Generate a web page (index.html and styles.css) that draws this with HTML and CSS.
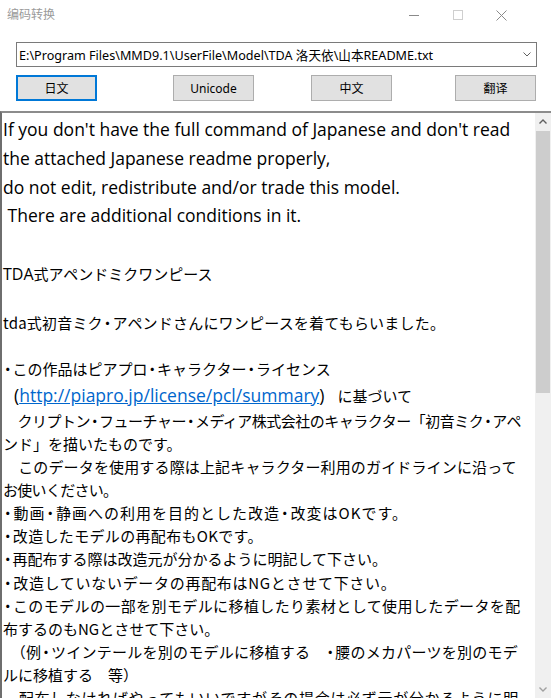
FILE: index.html
```html
<!DOCTYPE html>
<html lang="zh">
<head>
<meta charset="utf-8">
<title>编码转换</title>
<link rel="stylesheet" href="styles.css">
</head>
<body>
<div class="window">
  <div class="titlebar">
    <span class="title">编码转换</span>
    <div class="controls">
      <svg class="ctl ctl-min" width="11" height="11" viewBox="0 0 11 11"><line x1="0" y1="5.5" x2="10" y2="5.5" stroke="#8a8a8a" stroke-width="1"/></svg>
      <svg class="ctl ctl-max" width="10" height="10" viewBox="0 0 10 10"><rect x="0.5" y="0.5" width="9" height="9" fill="none" stroke="#cfcfcf" stroke-width="1"/></svg>
      <svg class="ctl ctl-close" width="11" height="11" viewBox="0 0 11 11"><path d="M0.5 0.5 L10.5 10.5 M10.5 0.5 L0.5 10.5" stroke="#8a8a8a" stroke-width="1" fill="none"/></svg>
    </div>
  </div>

  <div class="combo">
    <span class="combo-text">E:\Program Files\MMD9.1\UserFile\Model\TDA 洛天依\山本README.txt</span>
    <svg class="combo-arrow" width="8" height="5" viewBox="0 0 8 5"><polyline points="0.5,0.5 4,4 7.5,0.5" fill="none" stroke="#606060" stroke-width="1"/></svg>
  </div>

  <div class="btnrow">
    <button class="btn btn-focus">日文</button>
    <button class="btn btn-2">Unicode</button>
    <button class="btn btn-3">中文</button>
    <button class="btn btn-4">翻译</button>
  </div>

  <div class="textbox">
    <div class="content">
      <div class="ln en h29">If you don't have the full command of Japanese and don't read</div>
      <div class="ln en h29">the attached Japanese readme properly,</div>
      <div class="ln en h28">do not edit, redistribute and/or trade this model.</div>
      <div class="ln en h29">&nbsp;There are additional conditions in it.</div>
      <div class="ln en h31">&nbsp;</div>
      <div class="ln jp h25"><span class="lat16">TDA</span>式アペンドミクワンピース</div>
      <div class="ln jp h25">&nbsp;</div>
      <div class="ln jp h23 ls02">tda式初音ミク<span class="dot">・</span>アペンドさんにワンピースを着てもらいました。</div>
      <div class="ln jp h22">&nbsp;</div>
      <div class="ln jp h26"><span class="dot">・</span>この作品はピアプロ<span class="dot">・</span>キャラクター<span class="dot">・</span>ライセンス</div>
      <div class="ln jp h27"><span class="lat paren">(</span><a class="link" href="#">http://piapro.jp/license/pcl/summary</a><span class="lat">)</span><span class="gap"></span>に基づいて</div>
      <div class="ln jp h23 lsn05">　クリプトン<span class="dot">・</span>フューチャー<span class="dot">・</span>メディア株式会社のキャラクター「初音ミク<span class="dot">・</span>アペ</div>
      <div class="ln jp h23">ンド」を描いたものです。</div>
      <div class="ln jp h23 ls01">　このデータを使用する際は上記キャラクター利用のガイドラインに沿って</div>
      <div class="ln jp h23 lsn07">お使いください。</div>
      <div class="ln jp h23 ls10"><span class="dot">・</span>動画<span class="dot">・</span>静画への利用を目的とした改造<span class="dot">・</span>改変はOKです。</div>
      <div class="ln jp h23 ls03"><span class="dot">・</span>改造したモデルの再配布もOKです。</div>
      <div class="ln jp h24"><span class="dot">・</span>再配布する際は改造元が分かるように明記して下さい。</div>
      <div class="ln jp h23 ls07"><span class="dot">・</span>改造していないデータの再配布はNGとさせて下さい。</div>
      <div class="ln jp h23 ls04"><span class="dot">・</span>このモデルの一部を別モデルに移植したり素材として使用したデータを配</div>
      <div class="ln jp h23">布するのもNGとさせて下さい。</div>
      <div class="ln jp h23 ls025">　（例<span class="dot">・</span>ツインテールを別のモデルに移植する　<span class="dot">・</span>腰のメカパーツを別のモデ</div>
      <div class="ln jp h23">ルに移植する　等）</div>
      <div class="ln jp h23 ls07">　配布しなければやってもいいですがその場合は必ず元が分かるように明</div>
    </div>
    <div class="scrollbar">
      <div class="sb-btn">
        <svg width="8" height="5" viewBox="0 0 8 5"><polyline points="0.5,4.5 4,1 7.5,4.5" fill="none" stroke="#606060" stroke-width="1.4"/></svg>
      </div>
      <div class="sb-thumb"></div>
      <div class="sb-track"></div>
      <div class="sb-btn">
        <svg width="8" height="5" viewBox="0 0 8 5"><polyline points="0.5,0.5 4,4 7.5,0.5" fill="none" stroke="#a0a0a0" stroke-width="1.4"/></svg>
      </div>
    </div>
  </div>
</div>
</body>
</html>
```

FILE: styles.css
```css
html, body {
  margin: 0;
  padding: 0;
  background: #ffffff;
}

body {
  width: 551px;
  height: 698px;
  overflow: hidden;
  font-family: "Noto Sans", "Noto Sans CJK SC", sans-serif;
}

.window {
  display: flex;
  flex-direction: column;
  width: 551px;
  height: 698px;
  background: #ffffff;
}

.titlebar {
  display: flex;
  align-items: center;
  height: 30px;
  padding-left: 7px;
  box-sizing: border-box;
}

.title {
  font-family: "Noto Sans CJK SC", sans-serif;
  font-size: 12px;
  color: #9a9a9a;
  line-height: 14px;
  margin-top: -2px;
}

.controls {
  margin-left: auto;
  display: flex;
  align-items: center;
  padding-right: 44px;
}

.ctl { display: block; }
.ctl-max { margin-left: 33px; }
.ctl-close { margin-left: 33px; }

.combo {
  margin: 12px 0 0 16px;
  width: 521px;
  height: 25px;
  box-sizing: border-box;
  border: 1px solid #7a7a7a;
  display: flex;
  align-items: center;
  padding: 0 5px 0 2px;
}

.combo-text {
  font-family: "Noto Sans", "Noto Sans CJK SC", sans-serif;
  font-size: 12.6px;
  color: #000;
  white-space: nowrap;
}

.combo-arrow {
  margin-left: auto;
  display: block;
}

.btnrow {
  display: flex;
  margin: 8px 0 0 16px;
  height: 26px;
}

.btn {
  width: 81px;
  height: 26px;
  box-sizing: border-box;
  border: 1px solid #adadad;
  background: #e1e1e1;
  font-family: "Noto Sans", "Noto Sans CJK SC", sans-serif;
  font-size: 12px;
  color: #000;
  padding: 0;
  margin: 0;
}

.btn-focus { border: 2px solid #0078d7; }
.btn-2 { margin-left: 76px; }
.btn-3 { margin-left: 57px; }
.btn-4 { margin-left: 63px; }

.textbox {
  margin-top: 10px;
  flex: 1;
  display: flex;
  border-top: 2px solid #8c8c8c;
  border-left: 2px solid #6e6e6e;
  min-height: 0;
}

.content {
  flex: 1;
  padding: 2px 0 0 1px;
  overflow: hidden;
  color: #000;
}

.ln {
  white-space: nowrap;
}

.en {
  font-family: "Open Sans", "Noto Sans", sans-serif;
  font-size: 17.5px;
}

.jp {
  font-family: "Noto Sans CJK JP", sans-serif;
  font-size: 15px;
}

.dot {
  font-feature-settings: "palt" 1;
  padding: 0 1px;
}

.lat, .lat16, .link {
  font-family: "Open Sans", "Noto Sans", sans-serif;
  font-size: 17.5px;
}

.lat16 { font-size: 16px; }

.paren { margin-left: 11px; }

.link {
  color: #0066cc;
  text-decoration: underline;
}

.gap {
  display: inline-block;
  width: 13px;
}

.ls01 { letter-spacing: 0.15px; }
.ls02 { letter-spacing: 0.2px; }
.ls025 { letter-spacing: 0.25px; }
.ls03 { letter-spacing: 0.33px; }
.ls04 { letter-spacing: 0.4px; }
.ls07 { letter-spacing: 0.7px; }
.ls10 { letter-spacing: 1px; }
.lsn05 { letter-spacing: -0.5px; }
.lsn07 { letter-spacing: -0.7px; }

.h22 { height: 22px; line-height: 22px; }
.h23 { height: 23px; line-height: 23px; }
.h24 { height: 24px; line-height: 24px; }
.h25 { height: 25px; line-height: 25px; }
.h26 { height: 26px; line-height: 26px; }
.h27 { height: 27px; line-height: 27px; }
.h28 { height: 28px; line-height: 28px; }
.h29 { height: 29px; line-height: 29px; }
.h31 { height: 31px; line-height: 31px; }

.scrollbar {
  width: 16px;
  flex: none;
  display: flex;
  flex-direction: column;
  background: #f0f0f0;
}

.sb-btn {
  height: 17px;
  display: flex;
  align-items: center;
  justify-content: center;
  flex: none;
}

.sb-btn svg { display: block; }

.sb-thumb {
  height: 262px;
  margin: 1px 1px 0 1px;
  background: #cdcdcd;
  flex: none;
}

.sb-track { flex: 1; }
```
